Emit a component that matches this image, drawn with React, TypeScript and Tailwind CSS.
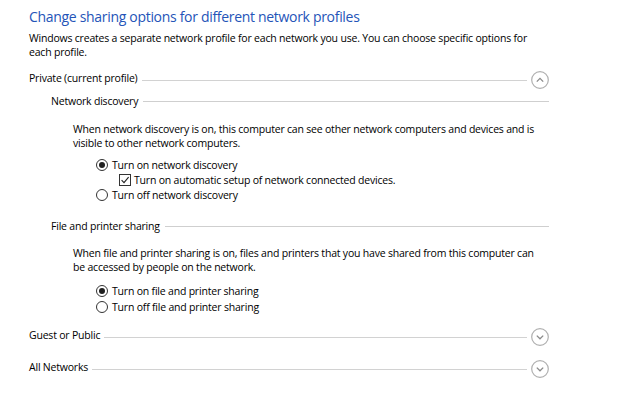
import React from "react";

function Chevron({ up }: { up?: boolean }) {
  return (
    <svg width="18" height="18" viewBox="0 0 18 18" className="ml-[4px] shrink-0">
      <circle cx="9" cy="9" r="8.3" fill="white" stroke="#b0b0b0" strokeWidth="1.2" />
      {up ? (
        <path d="M5.8 10.6 L9 7.4 L12.2 10.6" fill="none" stroke="#8a8a8a" strokeWidth="1.3" />
      ) : (
        <path d="M5.8 7.6 L9 10.8 L12.2 7.6" fill="none" stroke="#8a8a8a" strokeWidth="1.3" />
      )}
    </svg>
  );
}

function Header({ label, up, className }: { label: string; up?: boolean; className: string }) {
  return (
    <div className={`flex h-[18px] items-start ${className}`}>
      <span className="h-[14px] whitespace-nowrap leading-[14px]">{label}</span>
      <div className="ml-[4px] mt-[9px] h-[1px] min-w-0 flex-1 bg-[#d2d2d2]" />
      <Chevron up={up} />
    </div>
  );
}

function SubHeader({ label, className }: { label: string; className: string }) {
  return (
    <div className={`ml-[22px] flex h-[14px] w-[498px] items-start ${className}`}>
      <span className="h-[14px] shrink-0 whitespace-nowrap leading-[14px]">{label}</span>
      <div className="ml-[5px] mt-[7px] h-[1px] min-w-0 flex-1 bg-[#cfcfcf]" />
    </div>
  );
}

function Radio({ checked, label, h }: { checked?: boolean; label: string; h: string }) {
  return (
    <div className={`flex items-center ${h}`}>
      <span className="flex h-[12px] w-[12px] shrink-0 items-center justify-center rounded-full border border-[#333333] bg-white">
        {checked && <span className="h-[6px] w-[6px] rounded-full bg-[#1f1f1f]" />}
      </span>
      <span className="ml-[4px] h-[14px] whitespace-nowrap leading-[14px]">{label}</span>
    </div>
  );
}

function Check({ label, h }: { label: string; h: string }) {
  return (
    <div className={`ml-[23px] flex items-center ${h}`}>
      <span className="flex h-[12px] w-[12px] shrink-0 items-center justify-center border border-[#333333] bg-white">
        <svg width="10" height="10" viewBox="0 0 10 10">
          <path d="M1.6 5.2 L4 7.6 L8.6 2.2" fill="none" stroke="#222222" strokeWidth="1.1" />
        </svg>
      </span>
      <span className="ml-[3px] h-[14px] whitespace-nowrap leading-[14px]">{label}</span>
    </div>
  );
}

export default function App() {
  return (
    <div className="h-[400px] w-[640px] bg-white pl-[29px] pt-[7px] font-['Open_Sans',sans-serif] text-[10.5px] tracking-[-0.2px] text-black">
      <div className="flex w-[520px] flex-col">
        <h1 className="h-[20px] whitespace-nowrap text-[14px] leading-[20px] tracking-[-0.31px] text-[#2454b8]">
          Change sharing options for different network profiles
        </h1>
        <div className="mt-[4px] leading-[14px]">
          <div className="h-[14px] whitespace-nowrap">
            Windows creates a separate network profile for each network you use. You can choose specific options for
          </div>
          <div className="h-[14px] whitespace-nowrap">each profile.</div>
        </div>

        <Header label="Private (current profile)" up className="mt-[12px]" />
        <SubHeader label="Network discovery" className="mt-[5px]" />
        <div className="ml-[44px] mt-[14px] leading-[14px]">
          <div className="h-[14px] whitespace-nowrap">
            When network discovery is on, this computer can see other network computers and devices and is
          </div>
          <div className="h-[14px] whitespace-nowrap">visible to other network computers.</div>
        </div>
        <div className="ml-[67px] mt-[7px] flex flex-col">
          <Radio checked label="Turn on network discovery" h="h-[15px]" />
          <Check label="Turn on automatic setup of network connected devices." h="h-[15px]" />
          <Radio label="Turn off network discovery" h="h-[16px]" />
        </div>

        <SubHeader label="File and printer sharing" className="mt-[16px]" />
        <div className="ml-[44px] mt-[13px] leading-[14px]">
          <div className="h-[14px] whitespace-nowrap">
            When file and printer sharing is on, files and printers that you have shared from this computer can
          </div>
          <div className="h-[14px] whitespace-nowrap">be accessed by people on the network.</div>
        </div>
        <div className="ml-[67px] mt-[9px] flex flex-col">
          <Radio checked label="Turn on file and printer sharing" h="h-[16px]" />
          <Radio label="Turn off file and printer sharing" h="h-[16px]" />
        </div>

        <Header label="Guest or Public" className="mt-[13px]" />
        <Header label="All Networks" className="mt-[14px]" />
      </div>
    </div>
  );
}
